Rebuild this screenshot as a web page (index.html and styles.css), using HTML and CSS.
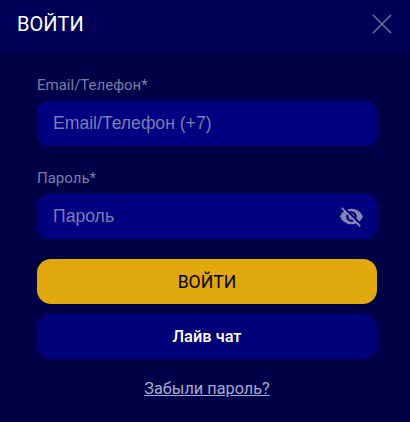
FILE: index.html
```html
<!DOCTYPE html>
<html>
<head>
    <title>Войти</title>
    <link rel="stylesheet" href="styles.css">
</head>
<body>
    <div class="modal">
        <div class="modal-header">
            <h2>ВОЙТИ</h2>
            <svg class="close-icon" width="20" height="20" viewBox="0 0 20 20">
                <path d="M1 1L19 19M19 1L1 19" stroke="#6f6f9c" stroke-width="1.6" fill="none"/>
            </svg>
        </div>
        <form class="modal-body">
            <div class="field">
                <label>Email/Телефон*</label>
                <div class="input-box"><span class="placeholder">Email/Телефон (+7)</span></div>
            </div>
            <div class="field">
                <label>Пароль*</label>
                <div class="input-box">
                    <span class="placeholder">Пароль</span>
                    <svg class="eye-icon" width="25" height="25" viewBox="0 0 24 24">
                        <path fill="#8484ae" d="M12 7c2.76 0 5 2.24 5 5 0 .65-.13 1.26-.36 1.83l2.92 2.92c1.51-1.26 2.7-2.89 3.43-4.75-1.73-4.39-6-7.5-11-7.5-1.4 0-2.74.25-3.98.7l2.16 2.16C10.74 7.13 11.35 7 12 7zM2 4.27l2.28 2.28.46.46C3.08 8.3 1.78 10.02 1 12c1.73 4.39 6 7.5 11 7.5 1.55 0 3.03-.3 4.38-.84l.42.42L19.73 22 21 20.73 3.27 3 2 4.27zM7.53 9.8l1.55 1.55c-.05.21-.08.43-.08.65 0 1.66 1.34 3 3 3 .22 0 .44-.03.65-.08l1.55 1.55c-.67.33-1.41.53-2.2.53-2.76 0-5-2.24-5-5 0-.79.2-1.53.53-2.2zm4.31-.78l3.15 3.15.02-.16c0-1.66-1.34-3-3-3l-.17.01z"/>
                    </svg>
                </div>
            </div>
            <button type="button" class="btn btn-login">ВОЙТИ</button>
            <button type="button" class="btn btn-chat">Лайв чат</button>
            <a class="forgot-link" href="#">Забыли пароль?</a>
        </form>
    </div>
</body>
</html>
```

FILE: styles.css
```css
* {
    box-sizing: border-box;
}
body {
    margin: 0;
    background-color: #000048;
    font-family: 'Roboto', sans-serif;
}
.modal {
    width: 410px;
    height: 422px;
    overflow: hidden;
}
.modal-header {
    display: flex;
    align-items: center;
    justify-content: space-between;
    height: 53px;
    padding: 0 18px 5px 17px;
    background-color: #000058;
}
.modal-header h2 {
    margin: 0;
    font-size: 20px;
    font-weight: 400;
    color: #fff;
}
.modal-body {
    display: flex;
    flex-direction: column;
    padding: 22px 33px 0 37px;
}
.field {
    margin-bottom: 22px;
}
.field label {
    display: block;
    height: 26px;
    line-height: 20px;
    font-size: 15px;
    color: #7d7da4;
}
.input-box {
    display: flex;
    align-items: center;
    justify-content: space-between;
    height: 45px;
    padding: 0 13px 0 16px;
    border-radius: 12px;
    background-color: #000080;
}
.placeholder {
    font-family: 'Liberation Sans', sans-serif;
    font-size: 17.6px;
    color: #7c7cb0;
}
.btn {
    display: block;
    width: 100%;
    height: 45px;
    border: none;
    border-radius: 14px;
    font-family: 'Roboto', sans-serif;
    cursor: pointer;
}
.btn-login {
    margin-top: -2px;
    background-color: #e0a80a;
    color: #000;
    font-size: 17.6px;
    font-weight: 400;
}
.btn-chat {
    margin-top: 10px;
    background-color: #000078;
    color: #fff;
    font-size: 16.4px;
    font-weight: 500;
}
.forgot-link {
    margin-top: 20px;
    text-align: center;
    font-size: 16.3px;
    color: #a9a9cc;
}
```
